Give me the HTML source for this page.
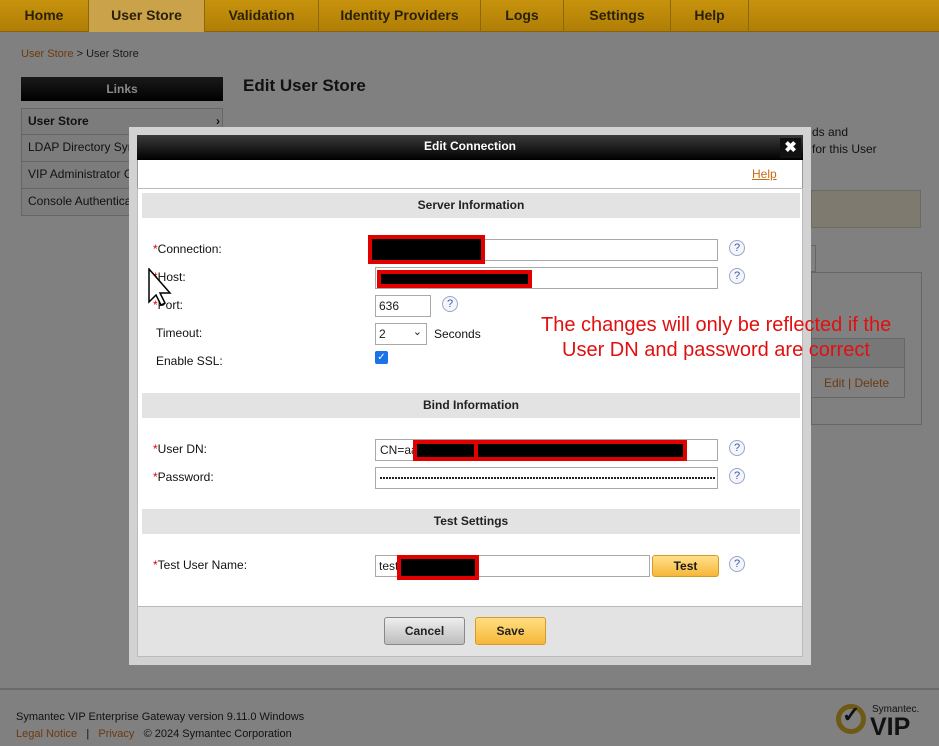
<!DOCTYPE html>
<html style="background:#808080"><head><meta charset="utf-8"><style>
*{box-sizing:border-box;margin:0;padding:0}
body{width:939px;height:746px;overflow:hidden;background:#808080;font-family:"Liberation Sans",Arial,sans-serif;font-size:12px;color:#1a1a1a;position:relative}
.a{position:absolute}
.nav{left:0;top:0;width:939px;height:32px;background:linear-gradient(#c7930d,#b07e06);border-bottom:1px solid #8a6208}
.nav div{position:absolute;top:0;height:32px;line-height:31px;font-size:14px;font-weight:bold;color:#2a2005;text-align:center;border-right:1px solid #8d6709}
.lnk{color:#6b3a10}
.side{left:21px;width:202px;height:27px;border:1px solid #666;border-top:none;padding-left:6px;line-height:24px;color:#111;background:#7c7c7c;white-space:nowrap;overflow:hidden}
.lbl{font-size:12px;color:#111}
.req{color:#d00}
.inp{background:#fff;border:1px solid #a9a9a9;height:22px}
.q{width:16px;height:16px;border:1px solid #9aa6c8;border-radius:50%;color:#3d5aa8;font-size:11px;text-align:center;line-height:14px;background:#f4f6fb}
.sec{left:142px;width:658px;height:25px;background:#e3e3e3;text-align:center;font-weight:bold;line-height:25px;color:#222}
.red{border:4px solid #e00000;background:#000}
</style></head><body>
<div class="a nav">
<div style="left:0;width:89px">Home</div>
<div style="left:89px;width:116px;background:#c9a24a">User Store</div>
<div style="left:205px;width:114px">Validation</div>
<div style="left:319px;width:162px">Identity Providers</div>
<div style="left:481px;width:83px">Logs</div>
<div style="left:564px;width:107px">Settings</div>
<div style="left:671px;width:78px">Help</div>
</div>
<div class="a" style="left:21px;top:48px;font-size:11px"><span class="lnk">User Store</span> &gt; User Store</div>
<div class="a" style="left:21px;top:77px;width:202px;height:24px;background:linear-gradient(#1a1a1a,#000);color:#8a8a8a;text-align:center;line-height:24px;font-weight:bold">Links</div>
<div class="a side" style="top:108px;border-top:1px solid #666;font-weight:bold">User Store<span style="position:absolute;right:2px">›</span></div>
<div class="a side" style="top:135px">LDAP Directory Sync</div>
<div class="a side" style="top:162px">VIP Administrator Group</div>
<div class="a side" style="top:189px">Console Authentication</div>
<div class="a" style="left:243px;top:76px;font-size:17px;font-weight:bold;color:#111">Edit User Store</div>
<div class="a" style="left:812px;top:124px;width:120px;line-height:17px;color:#111">ds and<br>for this User</div>
<div class="a" style="left:811px;top:190px;width:110px;height:38px;background:#7f7a70;border:1px solid #6d6a64"></div>
<div class="a" style="left:811px;top:245px;width:5px;height:27px;border:1px solid #666;border-left:none"></div>
<div class="a" style="left:811px;top:272px;width:111px;height:153px;border:1px solid #666"></div>
<div class="a" style="left:811px;top:338px;width:94px;height:60px;border:1px solid #666"></div>
<div class="a" style="left:811px;top:338px;width:94px;height:30px;background:#777;border:1px solid #666"></div>
<div class="a lnk" style="left:824px;top:376px">Edit | Delete</div>

<div class="a" style="left:129px;top:127px;width:682px;height:538px;background:#d2d2d2"></div>
<div class="a" style="left:137px;top:135px;width:666px;height:522px;background:#fff;border:1px solid #999"></div>
<div class="a" style="left:137px;top:135px;width:666px;height:25px;background:linear-gradient(#3a3a3a,#000);color:#fff;font-weight:bold;text-align:center;line-height:22px">Edit Connection</div>
<div class="a" style="left:780px;top:138px;width:21px;height:20px;background:#111;color:#fff;font-weight:bold;font-size:15px;text-align:center;line-height:20px">✖</div>
<div class="a" style="left:752px;top:167px;color:#c96a10;text-decoration:underline">Help</div>
<div class="a" style="left:137px;top:188px;width:666px;height:418px;border:1px solid #bbb;border-bottom:none"></div>
<div class="a sec" style="top:193px">Server Information</div>
<div class="a lbl" style="left:153px;top:242px"><span class="req">*</span>Connection:</div>
<div class="a inp" style="left:375px;top:239px;width:343px"></div>
<div class="a red" style="left:368px;top:235px;width:117px;height:29px"></div>
<div class="a q" style="left:729px;top:240px">?</div>
<div class="a lbl" style="left:153px;top:270px"><span class="req">*</span>Host:</div>
<div class="a inp" style="left:375px;top:267px;width:343px"></div>
<div class="a red" style="left:377px;top:270px;width:155px;height:18px"></div>
<div class="a q" style="left:729px;top:268px">?</div>
<div class="a lbl" style="left:153px;top:298px"><span class="req">*</span>Port:</div>
<div class="a inp" style="left:375px;top:295px;width:56px;padding:3px 3px;font-size:12px">636</div>
<div class="a q" style="left:442px;top:296px">?</div>
<div class="a lbl" style="left:156px;top:326px">Timeout:</div>
<div class="a inp" style="left:375px;top:323px;width:52px;padding:3px 3px">2<span style="position:absolute;right:4px;top:1px;font-size:11px">⌄</span></div>
<div class="a lbl" style="left:434px;top:327px">Seconds</div>
<div class="a lbl" style="left:156px;top:354px">Enable SSL:</div>
<div class="a" style="left:375px;top:351px;width:13px;height:13px;background:#1a73e8;border-radius:2px;color:#fff;font-size:10px;line-height:13px;text-align:center">✓</div>
<svg class="a" style="left:148px;top:268px" width="24" height="38"><path d="M1 1 L1 34 L8 27 L13 37 L17 35 L12 25 L22 25 Z" fill="#fff" stroke="#000" stroke-width="1.5"/></svg>
<div class="a" style="left:541px;top:313px;color:#e01010;font-size:20px;line-height:25px;white-space:nowrap">The changes will only be reflected if the<br><span style="padding-left:21px">User DN and password are correct</span></div>
<div class="a sec" style="top:393px">Bind Information</div>
<div class="a lbl" style="left:153px;top:442px"><span class="req">*</span>User DN:</div>
<div class="a inp" style="left:375px;top:439px;width:343px;padding:3px 4px">CN=aa</div>
<div class="a red" style="left:413px;top:440px;width:274px;height:21px"></div>
<div class="a" style="left:474px;top:440px;width:4px;height:21px;background:#e00000"></div>
<div class="a q" style="left:729px;top:440px">?</div>
<div class="a lbl" style="left:153px;top:470px"><span class="req">*</span>Password:</div>
<div class="a inp" style="left:375px;top:467px;width:343px"></div>
<div class="a" style="left:380px;top:477px;width:336px;height:2px;background-image:repeating-linear-gradient(90deg,#222 0 2px,transparent 2px 3px)"></div>
<div class="a q" style="left:729px;top:468px">?</div>
<div class="a sec" style="top:509px">Test Settings</div>
<div class="a lbl" style="left:153px;top:558px"><span class="req">*</span>Test User Name:</div>
<div class="a inp" style="left:375px;top:555px;width:275px;padding:3px 3px">test</div>
<div class="a red" style="left:397px;top:555px;width:82px;height:25px"></div>
<div class="a" style="left:652px;top:555px;width:67px;height:22px;background:linear-gradient(#ffe08a,#f6b73a);border:1px solid #d69a2a;border-radius:3px;text-align:center;line-height:20px;font-weight:bold">Test</div>
<div class="a q" style="left:729px;top:556px">?</div>
<div class="a" style="left:137px;top:606px;width:666px;height:51px;background:#e3e3e3;border:1px solid #bbb"></div>
<div class="a" style="left:384px;top:617px;width:81px;height:28px;background:linear-gradient(#eee,#bdbdbd);border:1px solid #888;border-radius:3px;text-align:center;line-height:26px;font-weight:bold;color:#222">Cancel</div>
<div class="a" style="left:475px;top:617px;width:71px;height:28px;background:linear-gradient(#ffdf80,#f6b73a);border:1px solid #d69a2a;border-radius:3px;text-align:center;line-height:26px;font-weight:bold;color:#222">Save</div>

<div class="a" style="left:0;top:688px;width:939px;height:2px;background:#6a6a6a"></div>
<div class="a" style="left:16px;top:711px;font-size:11px;color:#111">Symantec VIP Enterprise Gateway version 9.11.0 Windows</div>
<div class="a" style="left:16px;top:728px;font-size:11px;color:#111"><span class="lnk">Legal Notice</span> &nbsp;&nbsp;|&nbsp;&nbsp; <span class="lnk">Privacy</span> &nbsp;&nbsp;© 2024 Symantec Corporation</div>
<div class="a" style="left:836px;top:704px;width:30px;height:30px;border:5px solid #6e5a14;border-radius:50%"></div>
<div class="a" style="left:842px;top:702px;font-size:22px;font-weight:bold;color:#111">✓</div>
<div class="a" style="left:872px;top:704px;font-size:10px;color:#111">Symantec.</div>
<div class="a" style="left:870px;top:713px;font-size:25px;font-weight:bold;color:#111">VIP</div>
</body></html>
